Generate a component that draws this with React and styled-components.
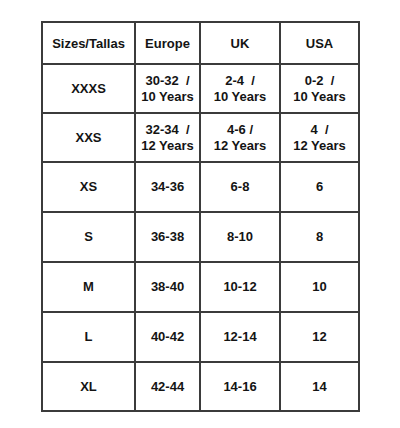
import styled, { createGlobalStyle } from 'styled-components';

const GlobalStyle = createGlobalStyle`
  html, body {
    margin: 0;
    padding: 0;
    background: #fff;
  }
  body {
    font-family: "Liberation Sans", Arial, sans-serif;
  }
`;

const Page = styled.div`
  width: 400px;
  height: 428px;
  padding: 21px 0 0 41px;
  box-sizing: border-box;
`;

// Tabla de tallas: las líneas salen del fondo oscuro entre celdas
const Chart = styled.div`
  display: grid;
  grid-template-columns: 91px 63px 78px 77px;
  grid-template-rows: 40px 47px 47px 48px 48px 48px 48px 47px;
  gap: 2px;
  padding: 2px;
  width: max-content;
  background: #3b3b3b;
`;

const Cell = styled.div`
  background: #fff;
  display: flex;
  align-items: center;
  justify-content: center;
  text-align: center;
  font-size: 13px;
  font-weight: bold;
  line-height: 16px;
  color: #141414;
  white-space: pre;
  padding-top: ${(props) => (props.$head ? '1px' : '0')};
`;

const headers = ['Sizes/Tallas', 'Europe', 'UK', 'USA'];

const rows = [
  ['XXXS', '30-32  /\n10 Years', '2-4  /\n10 Years', '0-2  /\n10 Years'],
  ['XXS', '32-34  /\n12 Years', '4-6 /\n12 Years', '4  /\n12 Years'],
  ['XS', '34-36', '6-8', '6'],
  ['S', '36-38', '8-10', '8'],
  ['M', '38-40', '10-12', '10'],
  ['L', '40-42', '12-14', '12'],
  ['XL', '42-44', '14-16', '14'],
];

const App = () => (
  <Page>
    <GlobalStyle />
    <Chart>
      {headers.map((h) => (
        <Cell key={h} $head>{h}</Cell>
      ))}
      {rows.map((row) =>
        row.map((value, i) => <Cell key={row[0] + i}>{value}</Cell>)
      )}
    </Chart>
  </Page>
);

export default App;
